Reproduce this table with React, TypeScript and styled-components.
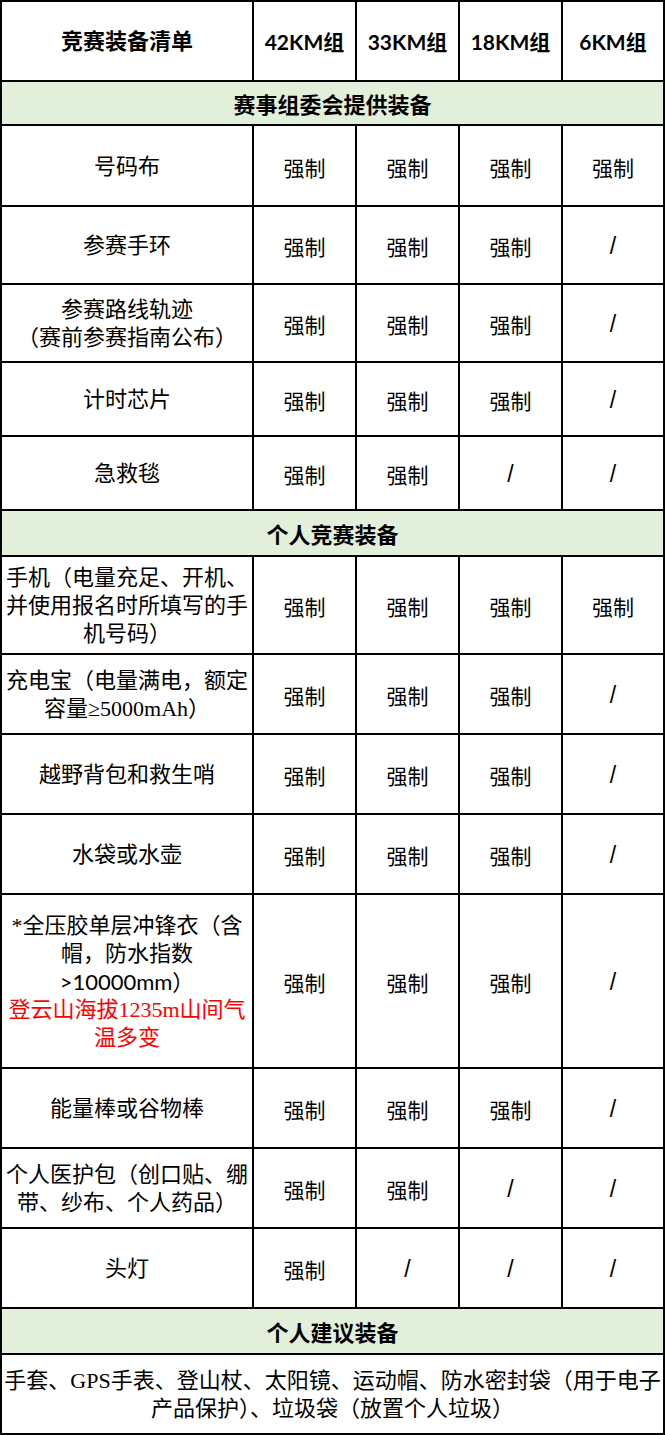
import React from "react";
import styled, { createGlobalStyle } from "styled-components";

const GlobalStyle = createGlobalStyle`
  body {
    margin: 0;
    background: #fff;
  }
`;

const Table = styled.div`
  width: 665px;
  box-sizing: border-box;
  display: flex;
  flex-direction: column;
  gap: 2px;
  padding: 2px;
  background: #000;
  font-family: "Liberation Serif", "Noto Sans CJK SC", serif;
  color: #000;
`;

const Row = styled.div<{ $h: number }>`
  display: grid;
  grid-template-columns: 250px 101px 101px 101px 100px;
  gap: 2px;
  height: ${(p) => p.$h}px;
`;

const Cell = styled.div`
  background: #fff;
  display: flex;
  flex-direction: column;
  align-items: center;
  justify-content: center;
  text-align: center;
  font-size: 22px;
  line-height: 28px;
  padding-top: 2px;
  box-sizing: border-box;
  white-space: nowrap;
`;

const HeadCell = styled(Cell)`
  font-weight: 700;
  font-size: 22px;
`;

const GroupCell = styled(Cell)`
  font-family: Lato, "Noto Sans CJK SC", sans-serif;
  font-weight: 700;
  font-size: 21px;
`;

const Value = styled(Cell)<{ $slash: boolean }>`
  font-family: ${(p) =>
    p.$slash ? `"Liberation Sans", sans-serif` : `"Noto Sans CJK SC", sans-serif`};
  font-size: ${(p) => (p.$slash ? 23 : 21)}px;
`;

const Section = styled.div<{ $h: number }>`
  height: ${(p) => p.$h}px;
  background: #e2efda;
  display: flex;
  align-items: center;
  justify-content: center;
  font-size: 22px;
  font-weight: 700;
`;

const Wide = styled(Cell)<{ $h: number }>`
  height: ${(p) => p.$h}px;
`;

const Sans = styled.span`
  font-family: Lato, "Noto Sans CJK SC", sans-serif;
`;

const Warn = styled.span`
  color: #ff0000;
`;

type Item = { label: React.ReactNode; values: string[]; h: number };

const provided: Item[] = [
  { label: "号码布", values: ["强制", "强制", "强制", "强制"], h: 79 },
  { label: "参赛手环", values: ["强制", "强制", "强制", "/"], h: 76 },
  {
    label: (
      <>
        <span>参赛路线轨迹</span>
        <span>（赛前参赛指南公布）</span>
      </>
    ),
    values: ["强制", "强制", "强制", "/"],
    h: 76,
  },
  { label: "计时芯片", values: ["强制", "强制", "强制", "/"], h: 72 },
  { label: "急救毯", values: ["强制", "强制", "/", "/"], h: 72 },
];

const personal: Item[] = [
  {
    label: (
      <>
        <span>手机（电量充足、开机、</span>
        <span>并使用报名时所填写的手</span>
        <span>机号码）</span>
      </>
    ),
    values: ["强制", "强制", "强制", "强制"],
    h: 96,
  },
  {
    label: (
      <>
        <span>充电宝（电量满电，额定</span>
        <span>容量≥5000mAh）</span>
      </>
    ),
    values: ["强制", "强制", "强制", "/"],
    h: 78,
  },
  { label: "越野背包和救生哨", values: ["强制", "强制", "强制", "/"], h: 78 },
  { label: "水袋或水壶", values: ["强制", "强制", "强制", "/"], h: 78 },
  {
    label: (
      <>
        <span>*全压胶单层冲锋衣（含</span>
        <span>帽，防水指数</span>
        <Sans>&gt;10000mm）</Sans>
        <Warn>登云山海拔1235m山间气</Warn>
        <Warn>温多变</Warn>
      </>
    ),
    values: ["强制", "强制", "强制", "/"],
    h: 172,
  },
  { label: "能量棒或谷物棒", values: ["强制", "强制", "强制", "/"], h: 78 },
  {
    label: (
      <>
        <span>个人医护包（创口贴、绷</span>
        <span>带、纱布、个人药品）</span>
      </>
    ),
    values: ["强制", "强制", "/", "/"],
    h: 78,
  },
  { label: "头灯", values: ["强制", "/", "/", "/"], h: 78 },
];

function ItemRow({ item }: { item: Item }) {
  return (
    <Row $h={item.h}>
      <Cell>{item.label}</Cell>
      {item.values.map((v, i) => (
        <Value key={i} $slash={v === "/"}>
          {v}
        </Value>
      ))}
    </Row>
  );
}

export default function App() {
  return (
    <>
      <GlobalStyle />
      <Table>
        <Row $h={78}>
          <HeadCell>竞赛装备清单</HeadCell>
          <GroupCell>42KM组</GroupCell>
          <GroupCell>33KM组</GroupCell>
          <GroupCell>18KM组</GroupCell>
          <GroupCell>6KM组</GroupCell>
        </Row>
        <Section $h={42}>赛事组委会提供装备</Section>
        {provided.map((item, i) => (
          <ItemRow key={i} item={item} />
        ))}
        <Section $h={44}>个人竞赛装备</Section>
        {personal.map((item, i) => (
          <ItemRow key={i} item={item} />
        ))}
        <Section $h={44}>个人建议装备</Section>
        <Wide $h={78}>
          <span>手套、GPS手表、登山杖、太阳镜、运动帽、防水密封袋（用于电子</span>
          <span>产品保护）、垃圾袋（放置个人垃圾）</span>
        </Wide>
      </Table>
    </>
  );
}
